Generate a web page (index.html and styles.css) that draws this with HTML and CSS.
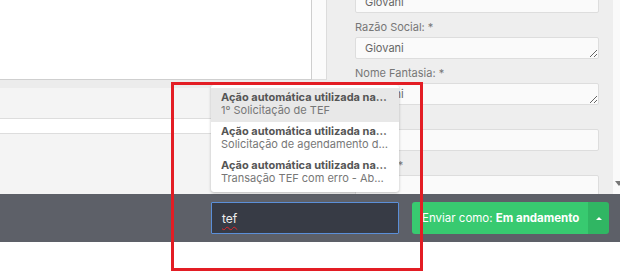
FILE: index.html
```html
<!DOCTYPE html>
<html lang="pt-BR">
<head>
<meta charset="utf-8">
<title>Atendimento</title>
<link rel="stylesheet" href="styles.css">
</head>
<body>
<div class="app">
  <div class="main">
    <div class="left">
      <div class="top">
        <div class="box"></div>
        <div class="strip"></div>
        <div class="fill"></div>
      </div>
      <div class="band"></div>
      <div class="row row-grey"></div>
      <div class="row row-white"></div>
      <div class="rest"></div>
    </div>
    <div class="right">
      <div class="form">
        <div class="field first"><span class="val">Giovani</span></div>
        <label class="lbl">Razão Social: *</label>
        <textarea class="area" rows="1">Giovani</textarea>
        <label class="lbl">Nome Fantasia: *</label>
        <textarea class="area" rows="1">Giovani</textarea>
        <label class="lbl">E-mail:</label>
        <div class="field"></div>
        <label class="lbl">Celular: *</label>
        <div class="field"></div>
      </div>
    </div>
    <div class="scroll"><span class="arrow"></span></div>
  </div>
  <div class="bar">
    <div class="search"><span class="typed">tef</span></div>
    <div class="send">
      <div class="send-main">Enviar como:&nbsp;<b>Em andamento</b></div>
      <div class="send-caret"><span class="tri"></span></div>
    </div>
  </div>
</div>

<ul class="menu">
  <li class="item active">
    <div class="title">Ação automática utilizada na abertura de chamados</div>
    <div class="sub">1º Solicitação de TEF</div>
  </li>
  <li class="item">
    <div class="title">Ação automática utilizada na abertura de chamados</div>
    <div class="sub">Solicitação de agendamento de visita técnica</div>
  </li>
  <li class="item">
    <div class="title">Ação automática utilizada na abertura de chamados</div>
    <div class="sub">Transação TEF com erro - Abertura de chamado</div>
  </li>
</ul>

<div class="highlight"></div>
</body>
</html>
```

FILE: styles.css
```css
* { box-sizing: border-box; }

html, body {
  margin: 0;
  padding: 0;
}

body {
  width: 620px;
  height: 273px;
  overflow: hidden;
  background: #ffffff;
  font-family: "Inter", "Noto Sans", sans-serif;
  position: relative;
}

.app {
  display: flex;
  flex-direction: column;
}

.main {
  height: 194px;
  display: flex;
}

/* left column */
.left {
  width: 340px;
  display: flex;
  flex-direction: column;
}

.top {
  height: 80px;
  display: flex;
}

.box {
  width: 312px;
  background: #ffffff;
  border-right: 1px solid #cfcfcf;
  border-bottom: 1px solid #cfcfcf;
}

.strip {
  width: 15px;
  background: #fbfbfb;
  border-right: 1px solid #dcdcdc;
  border-bottom: 1px solid #dcdcdc;
}

.fill {
  flex: 1;
  background: #eeeeee;
}

.band {
  height: 8px;
  background: #ececec;
}

.row-grey {
  height: 31px;
  background: #f4f4f4;
  border-bottom: 1px solid #dddddd;
}

.row-white {
  height: 15px;
  background: #ffffff;
  border-bottom: 1px solid #dddddd;
}

.rest {
  flex: 1;
  background: #f4f4f4;
}

/* right form */
.right {
  flex: 1;
  background: #eeeeee;
  overflow: hidden;
  padding: 0 14px 0 15px;
}

.form {
  display: flex;
  flex-direction: column;
}

.lbl {
  display: block;
  font-size: 11px;
  line-height: 14px;
  color: #777777;
  margin: 7px 0 3px;
  white-space: nowrap;
}

.field, .area {
  display: block;
  width: 100%;
  height: 22px;
  background: #fafafa;
  border: 1px solid #dddddd;
  border-radius: 2px;
  padding: 3px 9px;
  font-family: inherit;
  font-size: 11px;
  line-height: 14px;
  color: #666666;
  margin: 0;
}

.area {
  overflow: hidden;
  resize: both;
  outline: none;
}

.field.first {
  margin-top: -9px;
}

.scroll {
  width: 7px;
  background: #fafafa;
  position: relative;
}

.arrow {
  position: absolute;
  left: 2px;
  top: 181px;
  width: 0;
  height: 0;
  border-left: 4px solid transparent;
  border-right: 4px solid transparent;
  border-top: 5px solid #777777;
}

/* bottom bar */
.bar {
  height: 48px;
  background: #5d6068;
  display: flex;
  align-items: center;
  justify-content: flex-end;
  gap: 13px;
  padding-right: 11px;
}

.search {
  width: 188px;
  height: 32px;
  background: #373b45;
  border: 1px solid #5b8fd8;
  border-radius: 1px;
  padding-left: 10px;
  display: flex;
  align-items: center;
  font-size: 12px;
  color: #eeeeee;
}

.typed {
  text-decoration: underline wavy #e3262c;
  text-decoration-thickness: 1px;
  text-underline-offset: 3px;
}

.send {
  display: flex;
  height: 32px;
  width: 197px;
  border-radius: 3px;
  overflow: hidden;
}

.send-main {
  flex: 1;
  background: #38ca70;
  color: #ffffff;
  font-size: 11.5px;
  display: flex;
  align-items: center;
  padding-left: 10px;
  white-space: nowrap;
}

.send-main b {
  font-weight: 700;
}

.send-caret {
  width: 21px;
  background: #30b663;
  display: flex;
  align-items: center;
  justify-content: center;
}

.tri {
  width: 0;
  height: 0;
  border-left: 3px solid transparent;
  border-right: 3px solid transparent;
  border-bottom: 3px solid #ffffff;
}

/* autocomplete menu (popup) */
.menu {
  position: absolute;
  left: 211px;
  top: 85px;
  width: 188px;
  margin: 0;
  padding: 3px 0 2px;
  list-style: none;
  background: #ffffff;
  border-radius: 3px;
  box-shadow: 0 1px 3px rgba(0, 0, 0, 0.25);
}

.item {
  height: 34px;
  padding: 3px 10px 0 10px;
}

.item.active {
  background: #e8e8e8;
}

.title, .sub {
  font-size: 11px;
  line-height: 13px;
  white-space: nowrap;
  overflow: hidden;
  text-overflow: ellipsis;
}

.title {
  font-weight: 700;
  color: #555555;
}

.sub {
  color: #777777;
}

/* annotation rectangle */
.highlight {
  position: absolute;
  left: 171px;
  top: 82px;
  width: 252px;
  height: 189px;
  border: 3px solid #e31d24;
  pointer-events: none;
}
```
